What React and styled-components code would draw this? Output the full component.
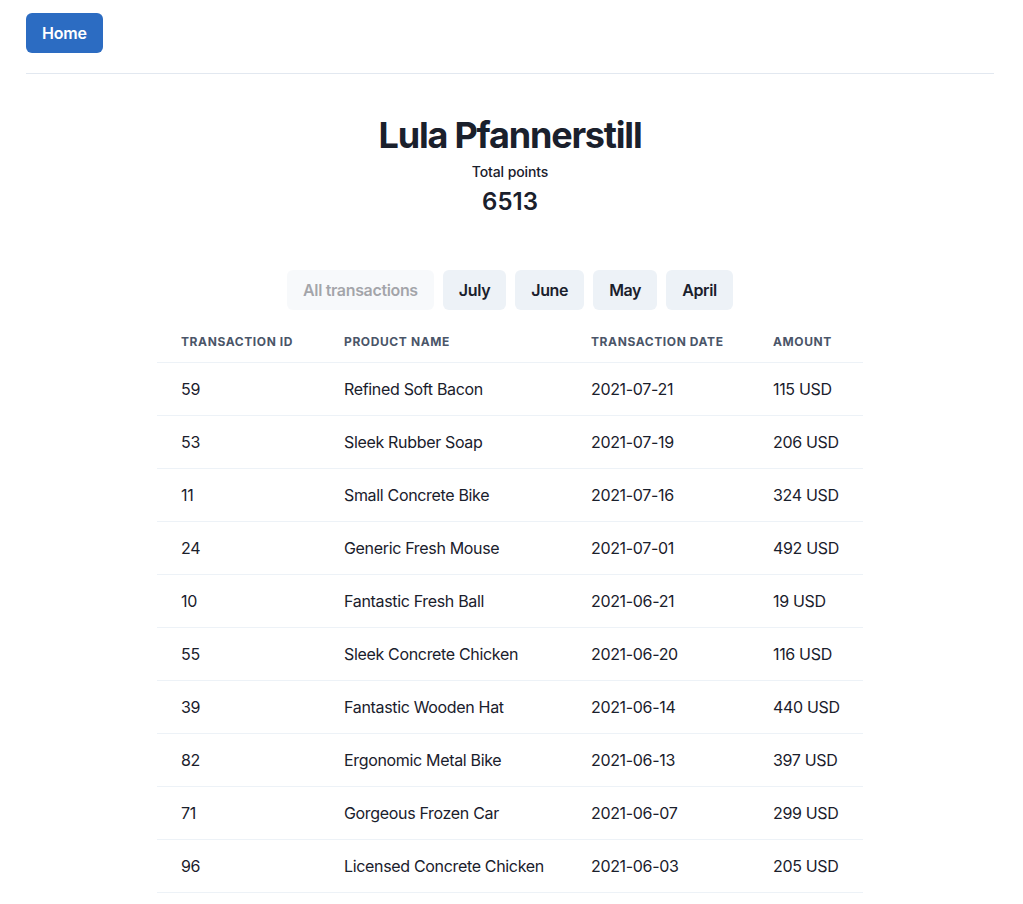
import React from "react";
import styled, { createGlobalStyle } from "styled-components";

const Global = createGlobalStyle`
  html, body { margin: 0; padding: 0; background: #fff; }
  body {
    font-family: Inter, "Noto Sans", "Liberation Sans", sans-serif;
    color: #1A202C;
    -webkit-font-smoothing: antialiased;
  }
  * { box-sizing: border-box; }
`;

const Page = styled.div`
  padding: 13px 29px 0 26px;
`;

const NavBar = styled.nav`
  display: flex;
  align-items: center;
  padding-bottom: 20px;
  border-bottom: 1px solid #E2E8F0;
`;

const PrimaryButton = styled.button`
  height: 40px;
  padding: 0 16px;
  border: none;
  border-radius: 6px;
  background: #2C6CC2;
  color: #fff;
  font-family: inherit;
  font-size: 16px;
  font-weight: 600;
  letter-spacing: -0.2px;
  cursor: pointer;
`;

const Profile = styled.section`
  display: flex;
  flex-direction: column;
  align-items: center;
  padding-top: 39px;
`;

const Name = styled.h1`
  margin: 0;
  font-size: 36px;
  line-height: 44px;
  font-weight: 700;
  letter-spacing: -1.2px;
  color: #1A202C;
`;

const Label = styled.div`
  margin-top: 5px;
  font-size: 14px;
  line-height: 20px;
  font-weight: 500;
  letter-spacing: -0.1px;
`;

const Points = styled.div`
  margin-top: 4px;
  font-size: 24px;
  line-height: 32px;
  font-weight: 600;
`;

const Filters = styled.div`
  display: flex;
  justify-content: center;
  gap: 9px;
  margin-top: 52px;
`;

const FilterButton = styled.button`
  height: 40px;
  padding: 0 16px;
  border: none;
  border-radius: 6px;
  background: #EDF2F7;
  color: #1A202C;
  font-family: inherit;
  font-size: 16px;
  font-weight: 600;
  letter-spacing: -0.35px;
  cursor: pointer;
  &:disabled {
    opacity: 0.4;
    cursor: not-allowed;
  }
`;

const Table = styled.table`
  width: 706px;
  margin: 12px auto 0;
  border-collapse: collapse;
  table-layout: fixed;
`;

const Th = styled.th`
  text-align: left;
  padding: 12px 24px;
  font-size: 12px;
  line-height: 16px;
  font-weight: 700;
  letter-spacing: 0.05em;
  text-transform: uppercase;
  color: #4A5568;
  border-bottom: 1px solid #EDF2F7;
  width: ${(p) => p.$w}px;
`;

const Td = styled.td`
  padding: 16px 24px;
  font-size: 16px;
  line-height: 20px;
  letter-spacing: -0.33px;
  color: #1A202C;
  border-bottom: 1px solid #EDF2F7;
  white-space: nowrap;
`;

const rows = [
  [59, "Refined Soft Bacon", "2021-07-21", 115],
  [53, "Sleek Rubber Soap", "2021-07-19", 206],
  [11, "Small Concrete Bike", "2021-07-16", 324],
  [24, "Generic Fresh Mouse", "2021-07-01", 492],
  [10, "Fantastic Fresh Ball", "2021-06-21", 19],
  [55, "Sleek Concrete Chicken", "2021-06-20", 116],
  [39, "Fantastic Wooden Hat", "2021-06-14", 440],
  [82, "Ergonomic Metal Bike", "2021-06-13", 397],
  [71, "Gorgeous Frozen Car", "2021-06-07", 299],
  [96, "Licensed Concrete Chicken", "2021-06-03", 205],
];

export default function App() {
  return (
    <>
      <Global />
      <Page>
        <NavBar>
          <PrimaryButton>Home</PrimaryButton>
        </NavBar>
        <Profile>
          <Name>Lula Pfannerstill</Name>
          <Label>Total points</Label>
          <Points>6513</Points>
        </Profile>
        <Filters>
          <FilterButton disabled>All transactions</FilterButton>
          <FilterButton>July</FilterButton>
          <FilterButton>June</FilterButton>
          <FilterButton>May</FilterButton>
          <FilterButton>April</FilterButton>
        </Filters>
        <Table>
          <thead>
            <tr>
              <Th $w={163}>Transaction ID</Th>
              <Th $w={247}>Product name</Th>
              <Th $w={182}>Transaction date</Th>
              <Th $w={114}>Amount</Th>
            </tr>
          </thead>
          <tbody>
            {rows.map(([id, name, date, amount]) => (
              <tr key={id}>
                <Td>{id}</Td>
                <Td>{name}</Td>
                <Td>{date}</Td>
                <Td>{amount} USD</Td>
              </tr>
            ))}
          </tbody>
        </Table>
      </Page>
    </>
  );
}
